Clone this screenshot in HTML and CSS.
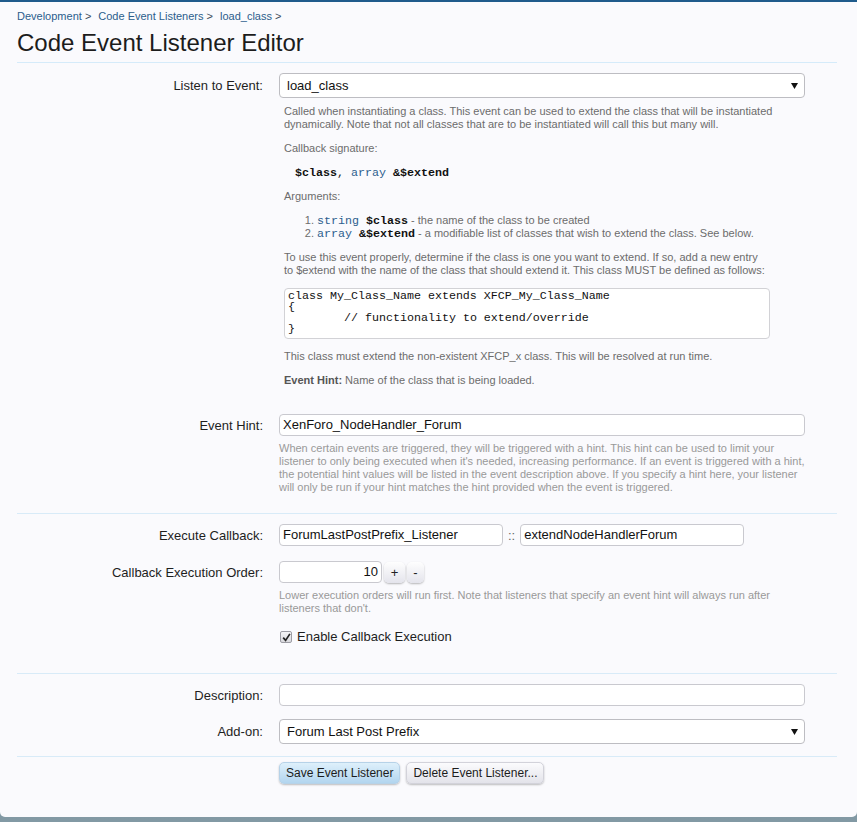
FILE: index.html
```html
<!DOCTYPE html>
<html>
<head>
<meta charset="utf-8">
<title>Code Event Listener Editor</title>
<link rel="stylesheet" href="styles.css">
</head>
<body>
<div class="panel">
  <nav class="breadcrumb">
    <span class="crumb"><a href="#">Development</a> &gt;</span>
    <span class="crumb"><a href="#">Code Event Listeners</a> &gt;</span>
    <span class="crumb"><a href="#">load_class</a> &gt;</span>
  </nav>
  <h1 class="title">Code Event Listener Editor</h1>

  <form class="form">
    <div class="section section-event">
      <div class="row">
        <label class="label label-select">Listen to Event:</label>
        <div class="ctrl">
          <div class="select"><span>load_class</span><svg class="arrow" width="7" height="6" viewBox="0 0 7 6"><path d="M0 0H7L3.5 6Z" fill="#111"/></svg></div>
          <div class="desc">
            <p>Called when instantiating a class. This event can be used to extend the class that will be instantiated dynamically. Note that not all classes that are to be instantiated will call this but many will.</p>
            <p>Callback signature:</p>
            <p class="sig"><code><span class="var">$class</span>, <span class="type">array</span> <span class="var">&amp;$extend</span></code></p>
            <p>Arguments:</p>
            <ol class="args">
              <li><code><span class="type">string</span> <span class="var">$class</span></code> - the name of the class to be created</li>
              <li><code><span class="type">array</span> <span class="var">&amp;$extend</span></code> - a modifiable list of classes that wish to extend the class. See below.</li>
            </ol>
            <p>To use this event properly, determine if the class is one you want to extend. If so, add a new entry to&nbsp;$extend with the name of the class that should extend it. This class MUST be defined as follows:</p>
            <pre class="code">class My_Class_Name extends XFCP_My_Class_Name
{
	// functionality to extend/override
}</pre>
            <p>This class must extend the non-existent XFCP_x class. This will be resolved at run time.</p>
            <p><b>Event Hint:</b> Name of the class that is being loaded.</p>
          </div>
        </div>
      </div>
      <div class="row row-hint">
        <label class="label">Event Hint:</label>
        <div class="ctrl">
          <div class="input">XenForo_NodeHandler_Forum</div>
          <p class="explain">When certain events are triggered, they will be triggered with a hint. This hint can be used to limit your listener to only being executed when it's needed, increasing performance. If an event is triggered with a hint, the potential hint values will be listed in the event description above. If you specify a hint here, your listener will only be run if your hint matches the hint provided when the event is triggered.</p>
        </div>
      </div>
    </div>

    <div class="section section-callback">
      <div class="row">
        <label class="label">Execute Callback:</label>
        <div class="ctrl callback">
          <div class="input input-half">ForumLastPostPrefix_Listener</div>
          <span class="sep">::</span>
          <div class="input input-half">extendNodeHandlerForum</div>
        </div>
      </div>
      <div class="row row-order">
        <label class="label">Callback Execution Order:</label>
        <div class="ctrl">
          <div class="spinner">
            <div class="input input-num">10</div>
            <span class="spin spin-plus">+</span>
            <span class="spin spin-minus">-</span>
          </div>
          <p class="explain explain-order">Lower execution orders will run first. Note that listeners that specify an event hint will always run after listeners that don't.</p>
          <div class="check">
            <span class="box"><svg width="9" height="9" viewBox="0 0 9 9"><path d="M1.2 4.6L3.6 7.4L7.9 0.9" fill="none" stroke="#222" stroke-width="1.7"/></svg></span>
            <span>Enable Callback Execution</span>
          </div>
        </div>
      </div>
    </div>

    <div class="section section-meta">
      <div class="row">
        <label class="label">Description:</label>
        <div class="ctrl"><div class="input"></div></div>
      </div>
      <div class="row row-addon">
        <label class="label label-select">Add-on:</label>
        <div class="ctrl">
          <div class="select"><span>Forum Last Post Prefix</span><svg class="arrow" width="7" height="6" viewBox="0 0 7 6"><path d="M0 0H7L3.5 6Z" fill="#111"/></svg></div>
        </div>
      </div>
    </div>

    <div class="section section-submit">
      <div class="row">
        <span></span>
        <div class="ctrl buttons">
          <button type="button" class="btn btn-primary">Save Event Listener</button>
          <button type="button" class="btn">Delete Event Listener...</button>
        </div>
      </div>
    </div>
  </form>
</div>
</body>
</html>
```

FILE: styles.css
```css
html, body {
  margin: 0;
  height: 100%;
}
body {
  background: linear-gradient(#5f7682, #8299a4);
  font-family: "Liberation Sans", Arial, sans-serif;
  color: #222;
}
.panel {
  background: #fafafd;
  border-top: 2px solid #1f5b8c;
  border-radius: 0 0 5px 5px;
  padding: 0 20px 33px 17px;
}
.breadcrumb {
  display: flex;
  gap: 7px;
  padding-top: 7px;
  font-size: 11px;
  line-height: 14px;
  color: #3a4a5a;
}
.breadcrumb a {
  color: #2b5d8c;
  text-decoration: none;
}
.title {
  margin: 6px 0 0;
  padding-bottom: 5px;
  font-size: 24px;
  line-height: 28px;
  font-weight: normal;
  color: #1c1c1c;
  border-bottom: 1px solid #d5ebfa;
}
.form {
  margin: 0;
}
.section + .section {
  border-top: 1px solid #d8ebf8;
}
.section-event {
  padding: 10px 0 19px;
}
.section-callback {
  padding: 10px 0 28px;
}
.section-meta {
  padding: 10px 0 12px;
}
.section-submit {
  padding: 5px 0 0;
}
.row {
  display: grid;
  grid-template-columns: 246px 526px;
  column-gap: 16px;
}
.label {
  text-align: right;
  font-size: 13px;
  line-height: 15px;
  padding-top: 4px;
  color: #1e1e1e;
}
.label-select {
  padding-top: 5px;
}
.row-hint {
  margin-top: 27px;
}
.row-order {
  margin-top: 15px;
}
.row-addon {
  margin-top: 13px;
}
.ctrl {
  min-width: 0;
}
.input {
  box-sizing: border-box;
  height: 22px;
  background: #fff;
  border: 1px solid #c9c9cf;
  border-radius: 4px;
  padding: 0 3px;
  font-size: 13px;
  line-height: 20px;
  color: #111;
  white-space: nowrap;
  overflow: hidden;
}
.select {
  box-sizing: border-box;
  height: 25px;
  background: #fff;
  border: 1px solid #bdbdc2;
  border-radius: 4px;
  padding: 0 6px 0 7px;
  display: flex;
  align-items: center;
  justify-content: space-between;
  font-size: 13px;
  color: #111;
}
.desc {
  width: 490px;
  margin-top: 7px;
  padding-left: 5px;
  font-size: 11px;
  line-height: 13px;
  color: #6c6c6c;
}
.desc p {
  margin: 11px 0 0;
}
.desc p:first-child {
  margin-top: 0;
}
.desc b {
  color: #555;
}
.desc code {
  font-family: "Liberation Mono", "Courier New", monospace;
  font-size: 11.67px;
  line-height: 10px;
}
.desc .var {
  font-weight: bold;
  color: #111;
}
.desc .type {
  color: #2d5e8e;
}
.sig {
  padding-left: 11px;
  color: #222;
}
.args {
  margin: 11px 0 0;
  padding-left: 33px;
}
.args li {
  line-height: 13px;
}
.code {
  width: 486px;
  margin: 11px 0 0;
  box-sizing: border-box;
  background: #fff;
  border: 1px solid #d2d2d6;
  border-radius: 4px;
  padding: 2px 3px 3px;
  font-family: "Liberation Mono", "Courier New", monospace;
  font-size: 11.67px;
  line-height: 11px;
  color: #111;
  tab-size: 8;
}
.explain {
  margin: 6px 0 0;
  font-size: 11px;
  line-height: 13px;
  color: #999;
}
.explain-order {
  margin-top: 6px;
}
.callback {
  display: flex;
  align-items: center;
}
.input-half {
  width: 224px;
}
.sep {
  margin: 0 5px;
  font-size: 13px;
  color: #666;
}
.spinner {
  display: flex;
  align-items: center;
  gap: 2px;
}
.input-num {
  width: 103px;
  text-align: right;
}
.spin {
  box-sizing: border-box;
  height: 21px;
  border-radius: 5px;
  background: linear-gradient(#fefefe, #e4e4ec);
  box-shadow: 0 1px 2px rgba(0, 0, 0, 0.28);
  font-size: 13px;
  line-height: 21px;
  text-align: center;
  color: #222;
}
.spin-plus {
  width: 21px;
}
.spin-minus {
  width: 17px;
}
.check {
  margin-top: 14px;
  display: flex;
  align-items: center;
  gap: 5px;
  font-size: 13px;
  line-height: 16px;
  color: #1e1e1e;
}
.box {
  box-sizing: border-box;
  width: 12px;
  height: 12px;
  margin-left: 1px;
  border: 1px solid #9c9ca4;
  border-radius: 2px;
  background: linear-gradient(#f4f4f6, #d9d9de);
  display: flex;
  align-items: center;
  justify-content: center;
}
.buttons {
  display: flex;
  gap: 6px;
}
.btn {
  box-sizing: border-box;
  height: 22px;
  padding: 0 6px;
  border: 1px solid #d2d2da;
  border-radius: 5px;
  background: linear-gradient(#fbfbfd, #e3e3ea);
  box-shadow: 0 1px 2px rgba(0, 0, 0, 0.25);
  font-family: "Liberation Sans", Arial, sans-serif;
  font-size: 12px;
  color: #1c1c1c;
}
.btn-primary {
  border-color: #b6d2e8;
  background: linear-gradient(#def0fb, #b2d5ef);
}
```
